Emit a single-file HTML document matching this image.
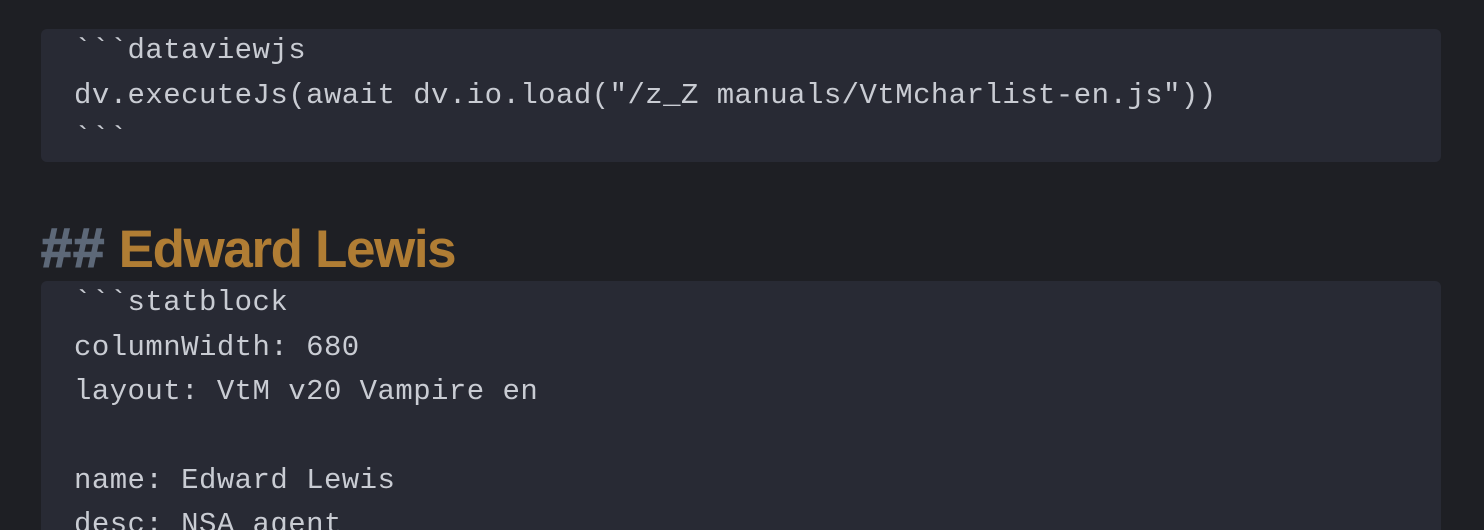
<!DOCTYPE html>
<html style="height:530px;overflow:hidden"><head><style>
body{margin:0;width:1484px;height:530px;background:#1e1f24;overflow:hidden;position:relative;font-family:"Liberation Mono",monospace;}
.blk{position:absolute;left:41px;width:1400px;background:#282a34;border-radius:6px;}
.ln{position:absolute;left:74px;font-size:29px;color:#c9ccd3;white-space:pre;letter-spacing:0.45px;line-height:44px;}
h2{position:absolute;left:41px;top:218px;margin:0;font-family:"Liberation Sans",sans-serif;font-weight:bold;font-size:53px;line-height:60px;white-space:pre;}
</style></head><body>
<div class="blk" style="top:29px;height:133px"></div>
<div class="ln" style="top:29px">&#96;&#96;&#96;dataviewjs</div>
<div class="ln" style="top:74px">dv.executeJs(await dv.io.load("/z_Z manuals/VtMcharlist-en.js"))</div>
<div class="ln" style="top:117px">&#96;&#96;&#96;</div>
<h2><span style="color:#5d6878;letter-spacing:1px;font-size:56px;-webkit-text-stroke:1.5px #5d6878">##</span><span style="letter-spacing:-1.4px"> <span style="color:#b07d34">Edward Lewis</span></span></h2>
<div class="blk" style="top:281px;height:249px;border-radius:6px 6px 0 0"></div>
<div class="ln" style="top:281px">&#96;&#96;&#96;statblock</div>
<div class="ln" style="top:326px">columnWidth: 680</div>
<div class="ln" style="top:370px">layout: VtM v20 Vampire en</div>
<div class="ln" style="top:459px">name: Edward Lewis</div>
<div class="ln" style="top:503px">desc: NSA agent</div>
</body></html>
